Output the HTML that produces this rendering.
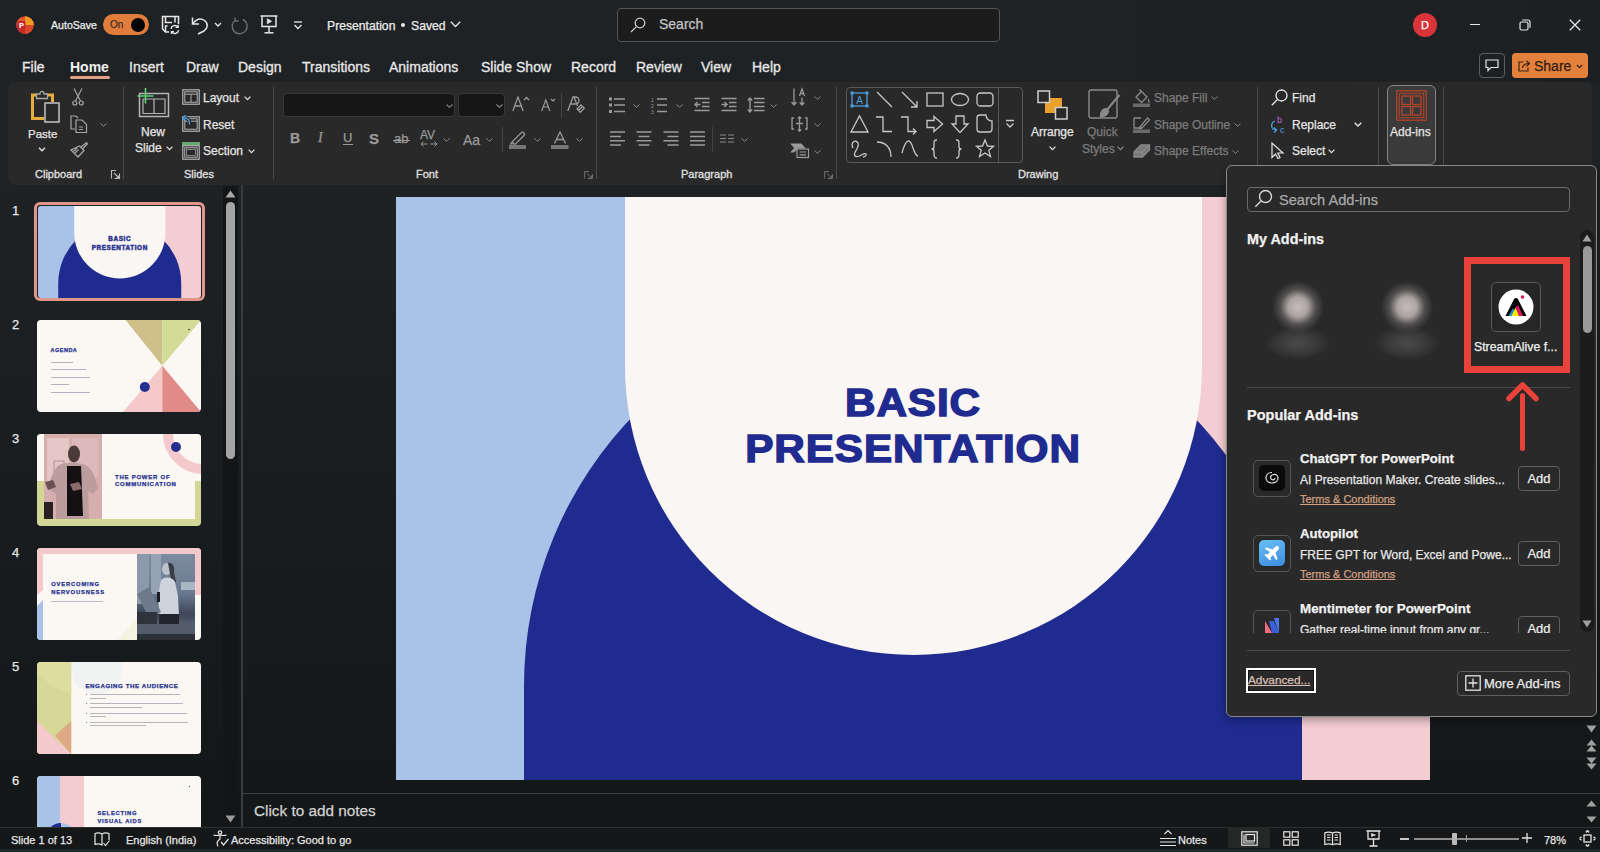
<!DOCTYPE html>
<html><head><meta charset="utf-8">
<style>
*{margin:0;padding:0;box-sizing:border-box}
html,body{width:1600px;height:852px;overflow:hidden;background:#1f2225;font-family:"Liberation Sans",sans-serif;color:#e6e6e6}
.a{position:absolute}
.t{position:absolute;white-space:nowrap;line-height:1;-webkit-text-stroke:0.25px currentColor}
#title{left:0;top:0;width:1600px;height:82px;background:linear-gradient(90deg,#1f2225 0%,#1f2225 70%,#1d2022 100%)}
#ribbon{left:8px;top:82px;width:1584px;height:103px;background:#292929;border-radius:8px}
#main{left:0;top:185px;width:1600px;height:642px;background:linear-gradient(180deg,#1e2224 0%,#191d1f 45%,#131718 100%)}
#status{left:0;top:827px;width:1600px;height:25px;background:#151718}
.tab{position:absolute;top:60px;font-size:14px;color:#e8e8e8;white-space:nowrap;line-height:1;-webkit-text-stroke:0.3px currentColor}
.sep{position:absolute;width:1px;background:#4a4a4a}
.lbl{position:absolute;font-size:12px;color:#e0e0e0;white-space:nowrap;line-height:1;-webkit-text-stroke:0.3px currentColor}
.rb{position:absolute;font-size:13px;color:#e6e6e6;white-space:nowrap;line-height:1;-webkit-text-stroke:0.25px currentColor}
.dim{color:#7c7c7c}
svg{position:absolute;overflow:visible}
</style></head><body>
<div id="title" class="a"></div>
<div id="ribbon" class="a"></div>
<div id="main" class="a"></div>
<div id="status" class="a"></div>

<!-- TITLEBAR -->
<div id="tb">
<svg style="left:16px;top:16px" width="18" height="18" viewBox="0 0 18 18">
 <circle cx="9" cy="9" r="8.7" fill="#e8582c"/>
 <path d="M9 9 L9 0.3 A8.7 8.7 0 0 1 17.7 9 Z" fill="#f39a22"/>
 <path d="M9 9 L17.7 9 A8.7 8.7 0 0 1 9 17.7 Z" fill="#d9462a"/>
 <path d="M0.3 9 A8.7 8.7 0 0 0 9 17.7 L9 9 Z" fill="#c42b2b"/>
 <rect x="1.5" y="5" width="8" height="8" rx="1" fill="#c1272d"/>
 <text x="5.5" y="11.8" font-size="7.5" font-weight="bold" fill="#fff" text-anchor="middle" font-family="Liberation Sans">P</text>
</svg>
<div class="t" style="left:51px;top:20px;font-size:10.6px;color:#f0f0f0">AutoSave</div>
<div class="a" style="left:103px;top:14px;width:46px;height:21px;border-radius:11px;background:#e07d3c"></div>
<div class="t" style="left:110px;top:20px;font-size:10px;color:#4a2e22">On</div>
<div class="a" style="left:131px;top:18px;width:14px;height:14px;border-radius:7px;background:#050505"></div>
<svg style="left:161px;top:15px" width="19" height="19" viewBox="0 0 19 19" fill="none" stroke="#e6e6e6" stroke-width="1.5">
 <path d="M8 17 H4.5 L1.5 14 V1.5 H17.5 V9"/><path d="M4.5 1.5 V7.5 H11 M14 1.5 V7.5"/><path d="M4.5 17 V11 H6.5"/>
 <path d="M10 13.8 A3.8 3.8 0 0 1 16.8 12" stroke-width="1.4"/><path d="M17.2 9.8 V12.4 H14.6" stroke-width="1.3"/>
 <path d="M17.6 15.2 A3.8 3.8 0 0 1 10.8 17" stroke-width="1.4"/><path d="M10.4 19 V16.6 H13" stroke-width="1.3"/>
</svg>
<svg style="left:191px;top:16px" width="19" height="19" viewBox="0 0 19 19" fill="none" stroke="#e6e6e6" stroke-width="1.5">
 <path d="M1.5 1.5 V8 H8"/><path d="M1.8 7.6 C5 3 9.5 1.6 13.5 4.5 C17.5 7.5 17 12 13 15 L7 18"/>
</svg>
<svg style="left:214px;top:22px" width="8" height="6" viewBox="0 0 8 6" fill="none" stroke="#e6e6e6" stroke-width="1.3"><path d="M1 1 L4 4 L7 1"/></svg>
<svg style="left:231px;top:17px" width="18" height="18" viewBox="0 0 18 18" fill="none" stroke="#6e6e6e" stroke-width="1.4">
 <path d="M12 2.5 A7.5 7.5 0 1 1 4.5 3"/><path d="M4 0.5 V4 H7.5"/>
</svg>
<svg style="left:260px;top:15px" width="18" height="19" viewBox="0 0 18 19" fill="none" stroke="#e6e6e6" stroke-width="1.5">
 <path d="M0.5 1 H17.5"/><path d="M2 1 V11.5 H16 V1"/><path d="M9 11.5 V17.5"/><path d="M4.5 17.8 H13.5"/>
 <path d="M7.3 3.8 L11.5 6.3 L7.3 8.8 Z" fill="#e6e6e6" stroke-width="0.8"/>
</svg>
<svg style="left:293px;top:21px" width="10" height="9" viewBox="0 0 10 9" fill="none" stroke="#e6e6e6" stroke-width="1.3">
 <path d="M1 1 H9"/><path d="M1.5 4 L5 7.5 L8.5 4"/>
</svg>
<div class="t" style="left:327px;top:20px;font-size:12.2px;color:#ececec">Presentation</div>
<div class="a" style="left:401px;top:23px;width:4px;height:4px;border-radius:2px;background:#ececec"></div>
<div class="t" style="left:411px;top:20px;font-size:12.2px;color:#ececec">Saved</div>
<svg style="left:450px;top:21px" width="11" height="7" viewBox="0 0 11 7" fill="none" stroke="#e6e6e6" stroke-width="1.3"><path d="M0.8 0.8 L5.5 5.5 L10.2 0.8"/></svg>

<div class="a" style="left:617px;top:8px;width:383px;height:34px;border-radius:4px;background:#1c1c1c;border:1px solid #555"></div>
<svg style="left:630px;top:17px" width="16" height="16" viewBox="0 0 16 16" fill="none" stroke="#c8c8c8" stroke-width="1.3">
 <circle cx="10" cy="6" r="4.8"/><path d="M6.6 9.4 L1 15"/>
</svg>
<div class="t" style="left:659px;top:17px;font-size:14px;color:#c4c4c4">Search</div>

<div class="a" style="left:1413px;top:13px;width:24px;height:24px;border-radius:12px;background:#d9343a"></div>
<div class="t" style="left:1413px;width:24px;text-align:center;top:20px;font-size:11px;color:#fff">D</div>
<div class="a" style="left:1470px;top:24px;width:10px;height:1.2px;background:#e6e6e6"></div>
<svg style="left:1519px;top:19px" width="12" height="12" viewBox="0 0 12 12" fill="none" stroke="#e6e6e6" stroke-width="1.2">
 <rect x="1" y="3" width="8" height="8" rx="1.5"/><path d="M3.2 1 H9 A2 2 0 0 1 11 3 V8.8"/>
</svg>
<svg style="left:1569px;top:19px" width="12" height="12" viewBox="0 0 12 12" fill="none" stroke="#e6e6e6" stroke-width="1.3">
 <path d="M0.8 0.8 L11.2 11.2 M11.2 0.8 L0.8 11.2"/>
</svg>

<div class="a" style="left:1479px;top:53px;width:26px;height:25px;border-radius:4px;border:1px solid #5e5e5e"></div>
<svg style="left:1485px;top:59px" width="14" height="13" viewBox="0 0 14 13" fill="none" stroke="#e6e6e6" stroke-width="1.2">
 <path d="M1 1 H13 V8.5 H6 L3 11.5 V8.5 H1 Z"/>
</svg>
<div class="a" style="left:1512px;top:53px;width:76px;height:25px;border-radius:4px;background:#e3813c"></div>
<svg style="left:1518px;top:59px" width="13" height="13" viewBox="0 0 13 13" fill="none" stroke="#3a2418" stroke-width="1.2">
 <path d="M5.5 3 H1 V12 H10 V8.5"/><path d="M4.5 9 C5 5.5 7.5 4.5 11 4.5"/><path d="M8.5 1.8 L11.5 4.5 L8.5 7.2"/>
</svg>
<div class="t" style="left:1534px;top:59px;font-size:14px;color:#2e1c12">Share</div>
<svg style="left:1576px;top:64px" width="7" height="5" viewBox="0 0 7 5" fill="none" stroke="#2e1c12" stroke-width="1.2"><path d="M0.8 0.8 L3.5 3.6 L6.2 0.8"/></svg>
</div>

<!-- RIBBON CONTENT -->
<div id="rib">
<!-- Clipboard -->
<svg style="left:30px;top:89px" width="30" height="34" viewBox="0 0 30 34" fill="none">
 <path d="M2.5 6 V29.5 H14" stroke="#e8ac3c" stroke-width="3"/><path d="M1 6 H8 M16 6 H22.5 V13" stroke="#e8ac3c" stroke-width="3"/>
 <path d="M6.5 9.5 V5 H10 C10 1.5 14 1.5 14 5 H17.5 V9.5 Z" stroke="#a8a8a8" stroke-width="1.3" fill="#292929"/>
 <rect x="15" y="14" width="14" height="19" stroke="#c4c4c4" stroke-width="1.5" fill="#292929"/>
</svg>
<div class="rb" style="left:28px;top:129px;font-size:11.5px">Paste</div>
<svg style="left:38px;top:147px" width="8" height="5" viewBox="0 0 8 5" fill="none" stroke="#e6e6e6" stroke-width="1.3"><path d="M1 0.8 L4 3.8 L7 0.8"/></svg>
<svg style="left:72px;top:88px" width="12" height="18" viewBox="0 0 12 18" fill="none" stroke="#a6a6a6" stroke-width="1.2">
 <path d="M2 0.5 L8.5 13 M10 0.5 L3.5 13"/><circle cx="2.8" cy="15" r="2"/><circle cx="9.2" cy="15" r="2"/>
</svg>
<svg style="left:70px;top:115px" width="18" height="18" viewBox="0 0 18 18" fill="none" stroke="#a6a6a6" stroke-width="1.2">
 <path d="M5 14 H1 V1 H6 L8 3"/><path d="M6 5 H12 L16.5 9.5 V17.5 H6 Z"/><path d="M9 12 H13 M9 14.5 H13"/>
</svg>
<svg style="left:100px;top:123px" width="7" height="4" viewBox="0 0 7 4" fill="none" stroke="#8a8a8a" stroke-width="1"><path d="M0.5 0.5 L3.5 3.3 L6.5 0.5"/></svg>
<svg style="left:70px;top:142px" width="18" height="16" viewBox="0 0 18 16" fill="none" stroke="#a6a6a6" stroke-width="1.3">
 <path d="M11 5 L16.5 0.8 L17.3 2 L13 6.5"/><path d="M9.5 4 L14 8.5 L8 15 L1 8 Z"/><path d="M5 11 L8.5 7.5 M3.5 9.5 L7 6"/>
</svg>
<div class="lbl" style="left:35px;top:169px;font-size:11px">Clipboard</div>
<svg style="left:111px;top:170px" width="9" height="9" viewBox="0 0 9 9" fill="none" stroke="#bdbdbd" stroke-width="1.1"><path d="M0.5 8.5 V0.5 H5 M8.5 3.5 V8.5 H3.5 M3 3 L8 8 M8 5 V8 H5"/></svg>
<div class="sep" style="left:123px;top:87px;height:92px"></div>

<!-- Slides -->
<svg style="left:137px;top:88px" width="34" height="30" viewBox="0 0 34 30" fill="none">
 <rect x="2.5" y="5.5" width="29" height="23" stroke="#b4b4b4" stroke-width="1.5"/>
 <path d="M6 11 H28 V25.5 H6 Z M17 11 V25.5" stroke="#b4b4b4" stroke-width="1.2"/>
 <path d="M8.5 0 V15.5 M0.5 8 H16.5" stroke="#5fd17a" stroke-width="1.6"/>
</svg>
<div class="rb" style="left:141px;top:126px;font-size:12px">New</div>
<div class="rb" style="left:135px;top:142px;font-size:12px">Slide</div>
<svg style="left:166px;top:146px" width="7" height="5" viewBox="0 0 7 5" fill="none" stroke="#e6e6e6" stroke-width="1.2"><path d="M0.6 0.6 L3.5 3.6 L6.4 0.6"/></svg>
<svg style="left:182px;top:89px" width="18" height="16" viewBox="0 0 18 16" fill="none" stroke="#c0c0c0" stroke-width="1.1">
 <rect x="0.8" y="0.8" width="16.4" height="14.4"/><rect x="2.8" y="2.8" width="12.4" height="10.4" stroke-width="0.9"/><path d="M2.8 5.2 H15.2 M9 5.2 V13.2" stroke-width="0.9"/>
</svg>
<div class="rb" style="left:203px;top:92px;font-size:12px">Layout</div>
<svg style="left:244px;top:96px" width="7" height="5" viewBox="0 0 7 5" fill="none" stroke="#e6e6e6" stroke-width="1.2"><path d="M0.6 0.6 L3.5 3.6 L6.4 0.6"/></svg>
<svg style="left:180px;top:114px" width="20" height="18" viewBox="0 0 20 18" fill="none" stroke="#c0c0c0" stroke-width="1.1">
 <rect x="2.8" y="2.8" width="16.4" height="14.4"/><rect x="4.8" y="4.8" width="12.4" height="10.4" stroke-width="0.9"/><path d="M4.8 7.2 H17.2" stroke-width="0.9"/>
 <path d="M9.5 10.5 C10 6 7.5 3.5 3.5 4" stroke="#292929" stroke-width="3.2"/>
 <path d="M9.5 10.5 C10 6 7.5 3.5 3.5 4" stroke="#4a9ee0" stroke-width="1.4"/><path d="M5.5 1.2 L2.5 4 L5.5 6.8" stroke="#4a9ee0" stroke-width="1.4"/>
</svg>
<div class="rb" style="left:203px;top:119px;font-size:12px">Reset</div>
<svg style="left:182px;top:142px" width="18" height="18" viewBox="0 0 18 18" fill="none" stroke="#c0c0c0" stroke-width="1.1">
 <rect x="0" y="0" width="18" height="3.5" fill="#6aa872" stroke="none"/>
 <rect x="0.8" y="3.8" width="16.4" height="13.4"/><rect x="2.8" y="5.8" width="12.4" height="9.4" stroke-width="0.9"/><rect x="4.5" y="7.5" width="9" height="6" stroke-width="0.8" stroke="#9a9a9a"/>
</svg>
<div class="rb" style="left:203px;top:145px;font-size:12px">Section</div>
<svg style="left:248px;top:149px" width="7" height="5" viewBox="0 0 7 5" fill="none" stroke="#e6e6e6" stroke-width="1.2"><path d="M0.6 0.6 L3.5 3.6 L6.4 0.6"/></svg>
<div class="lbl" style="left:184px;top:169px;font-size:11px">Slides</div>
<div class="sep" style="left:273px;top:87px;height:92px"></div>

<!-- Font -->
<div class="a" style="left:283px;top:93px;width:172px;height:24px;border-radius:4px;background:#161616;border:1px solid #383838"></div>
<svg style="left:446px;top:104px" width="7" height="4" viewBox="0 0 7 4" fill="none" stroke="#8a8a8a" stroke-width="1.1"><path d="M0.5 0.5 L3.5 3.3 L6.5 0.5"/></svg>
<div class="a" style="left:458px;top:93px;width:47px;height:24px;border-radius:4px;background:#161616;border:1px solid #383838"></div>
<svg style="left:496px;top:104px" width="7" height="4" viewBox="0 0 7 4" fill="none" stroke="#8a8a8a" stroke-width="1.1"><path d="M0.5 0.5 L3.5 3.3 L6.5 0.5"/></svg>
<svg style="left:512px;top:96px" width="18" height="16" viewBox="0 0 18 16" fill="none" stroke="#9a9a9a" stroke-width="1.3">
 <path d="M0.8 15 L6 1 L11.2 15 M2.6 10 H9.4"/><path d="M12 4 L14.5 1.5 L17 4"/>
</svg>
<svg style="left:541px;top:98px" width="15" height="14" viewBox="0 0 15 14" fill="none" stroke="#9a9a9a" stroke-width="1.2">
 <path d="M0.7 13 L4.8 2 L8.9 13 M2.2 9 H7.4"/><path d="M10 1 L12 3 L14 1"/>
</svg>
<div class="sep" style="left:561px;top:93px;height:25px;background:#444"></div>
<svg style="left:567px;top:96px" width="18" height="18" viewBox="0 0 18 18" fill="none" stroke="#9a9a9a" stroke-width="1.3">
 <path d="M0.8 15 L6 1 H7 L10.5 10 M1.5 13 L3.5 7.5"/><path d="M7 1 H8.5 A3.5 3.5 0 0 1 8.5 8 H4"/><path d="M10 13 L14 9 L17.3 12.3 L13.3 16.3 Z M11.5 14.5 L15.5 10.5"/>
</svg>
<div class="t" style="left:290px;top:131px;font-size:14px;font-weight:bold;color:#9a9a9a">B</div>
<div class="t" style="left:318px;top:131px;font-size:14px;font-style:italic;font-family:'Liberation Serif';color:#9a9a9a">I</div>
<div class="t" style="left:343px;top:131px;font-size:13px;color:#9a9a9a">U</div>
<div class="a" style="left:343px;top:144px;width:10px;height:1.3px;background:#9a9a9a"></div>
<div class="t" style="left:369px;top:131px;font-size:15px;font-weight:bold;color:#9a9a9a">S</div>
<div class="t" style="left:394px;top:132px;font-size:13px;color:#9a9a9a">ab</div>
<div class="a" style="left:393px;top:140px;width:17px;height:1.3px;background:#9a9a9a"></div>
<div class="t" style="left:420px;top:129px;font-size:12px;color:#9a9a9a">AV</div>
<svg style="left:420px;top:141px" width="18" height="6" viewBox="0 0 18 6" fill="none" stroke="#9a9a9a" stroke-width="1"><path d="M1 3 H7.5 M3.5 0.5 L1 3 L3.5 5.5 M10.5 3 H17 M14.5 0.5 L17 3 L14.5 5.5"/></svg>
<svg style="left:443px;top:138px" width="7" height="4" viewBox="0 0 7 4" fill="none" stroke="#8a8a8a" stroke-width="1"><path d="M0.5 0.5 L3.5 3.3 L6.5 0.5"/></svg>
<div class="t" style="left:463px;top:133px;font-size:14px;color:#9a9a9a">Aa</div>
<svg style="left:486px;top:138px" width="7" height="4" viewBox="0 0 7 4" fill="none" stroke="#8a8a8a" stroke-width="1"><path d="M0.5 0.5 L3.5 3.3 L6.5 0.5"/></svg>
<div class="sep" style="left:502px;top:127px;height:25px;background:#444"></div>
<svg style="left:509px;top:130px" width="18" height="19" viewBox="0 0 18 19" fill="none" stroke="#9a9a9a" stroke-width="1.2">
 <path d="M3 12 L12 3 A1.6 1.6 0 0 1 15 5.5 L6 14.5 Z M2.5 12.5 L1.5 14 H4.5"/>
 <rect x="0" y="15" width="17" height="4" fill="#777" stroke="none"/>
</svg>
<svg style="left:534px;top:138px" width="7" height="4" viewBox="0 0 7 4" fill="none" stroke="#8a8a8a" stroke-width="1"><path d="M0.5 0.5 L3.5 3.3 L6.5 0.5"/></svg>
<svg style="left:551px;top:131px" width="18" height="18" viewBox="0 0 18 18" fill="none" stroke="#9a9a9a" stroke-width="1.3">
 <path d="M3.5 12.5 L9 1 L14.5 12.5 M5.5 8.5 H12.5"/><rect x="0" y="14" width="17.5" height="4" fill="#777" stroke="none"/>
</svg>
<svg style="left:576px;top:138px" width="7" height="4" viewBox="0 0 7 4" fill="none" stroke="#8a8a8a" stroke-width="1"><path d="M0.5 0.5 L3.5 3.3 L6.5 0.5"/></svg>
<div class="lbl" style="left:416px;top:169px;font-size:11px">Font</div>
<svg style="left:584px;top:171px" width="9" height="8" viewBox="0 0 9 8" fill="none" stroke="#6a6a6a" stroke-width="1"><path d="M0.5 7.5 V0.5 H5 M8.5 3 V7.5 H4 M3 2.5 L7.5 7 M7.5 4.5 V7 H5"/></svg>
<div class="sep" style="left:596px;top:87px;height:92px"></div>
<!-- Paragraph -->
<svg style="left:609px;top:97px" width="17" height="16" viewBox="0 0 17 16" fill="#9a9a9a" stroke="#9a9a9a" stroke-width="1.4">
 <rect x="0" y="0.5" width="3" height="3" stroke="none"/><rect x="0" y="6.5" width="3" height="3" stroke="none"/><rect x="0" y="13" width="3" height="3" stroke="none"/>
 <path d="M5 2 H16 M5 8 H16 M5 14.5 H16" fill="none"/>
</svg>
<svg style="left:633px;top:104px" width="7" height="4" viewBox="0 0 7 4" fill="none" stroke="#8a8a8a" stroke-width="1"><path d="M0.5 0.5 L3.5 3.3 L6.5 0.5"/></svg>
<svg style="left:651px;top:97px" width="17" height="17" viewBox="0 0 17 17" fill="none" stroke="#9a9a9a" stroke-width="1.4">
 <path d="M6 2 H16 M6 8 H16 M6 14.5 H16"/>
 <text x="0" y="4.5" font-size="5" fill="#9a9a9a" stroke="none" font-family="Liberation Sans">1</text><text x="0" y="10.5" font-size="5" fill="#9a9a9a" stroke="none" font-family="Liberation Sans">2</text><text x="0" y="17" font-size="5" fill="#9a9a9a" stroke="none" font-family="Liberation Sans">3</text>
</svg>
<svg style="left:676px;top:104px" width="7" height="4" viewBox="0 0 7 4" fill="none" stroke="#8a8a8a" stroke-width="1"><path d="M0.5 0.5 L3.5 3.3 L6.5 0.5"/></svg>
<svg style="left:694px;top:97px" width="16" height="16" viewBox="0 0 16 16" fill="none" stroke="#9a9a9a" stroke-width="1.4">
 <path d="M0.5 1.5 H15.5 M8 5.5 H15.5 M8 9.5 H15.5 M0.5 13.5 H15.5 M1 7.5 H6.5 M3.5 5 L1 7.5 L3.5 10"/>
</svg>
<svg style="left:721px;top:97px" width="16" height="16" viewBox="0 0 16 16" fill="none" stroke="#9a9a9a" stroke-width="1.4">
 <path d="M0.5 1.5 H15.5 M8 5.5 H15.5 M8 9.5 H15.5 M0.5 13.5 H15.5 M0.5 7.5 H6 M3.5 5 L6 7.5 L3.5 10"/>
</svg>
<svg style="left:747px;top:97px" width="18" height="16" viewBox="0 0 18 16" fill="none" stroke="#9a9a9a" stroke-width="1.4">
 <path d="M7 1.5 H17.5 M7 5.5 H17.5 M7 9.5 H17.5 M7 13.5 H17.5 M3 1 V15 M0.8 3.5 L3 1 L5.2 3.5 M0.8 12.5 L3 15 L5.2 12.5"/>
</svg>
<svg style="left:770px;top:104px" width="7" height="4" viewBox="0 0 7 4" fill="none" stroke="#8a8a8a" stroke-width="1"><path d="M0.5 0.5 L3.5 3.3 L6.5 0.5"/></svg>
<svg style="left:791px;top:88px" width="17" height="18" viewBox="0 0 17 18" fill="none" stroke="#9a9a9a" stroke-width="1.3">
 <path d="M3 0.5 V17 M0.5 14 L3 17 L5.5 14"/><path d="M8.5 8 L11 1 L13.5 8 M9.3 5.7 H12.7"/><path d="M11 9.5 V17 M8.8 14.5 L11 17 L13.2 14.5"/>
</svg>
<svg style="left:814px;top:96px" width="7" height="4" viewBox="0 0 7 4" fill="none" stroke="#8a8a8a" stroke-width="1"><path d="M0.5 0.5 L3.5 3.3 L6.5 0.5"/></svg>
<svg style="left:791px;top:116px" width="17" height="16" viewBox="0 0 17 16" fill="none" stroke="#9a9a9a" stroke-width="1.3">
 <path d="M3 2 H1 V13 H3 M14 2 H16 V13 H14 M5 7.5 H12 M8.5 0.5 V15.5 M6.8 2.5 L8.5 0.8 L10.2 2.5 M6.8 13.5 L8.5 15.2 L10.2 13.5"/>
</svg>
<svg style="left:814px;top:123px" width="7" height="4" viewBox="0 0 7 4" fill="none" stroke="#8a8a8a" stroke-width="1"><path d="M0.5 0.5 L3.5 3.3 L6.5 0.5"/></svg>
<svg style="left:791px;top:143px" width="18" height="15" viewBox="0 0 18 15" fill="none" stroke="#9a9a9a" stroke-width="1.2">
 <path d="M0.5 1 H10 L13.5 5 H6.5 L3 9 H0.5 L4 5 Z" fill="#9a9a9a"/><rect x="6" y="6" width="11.5" height="8.5" fill="#292929"/><path d="M8.5 9 H15 M8.5 11.8 H15"/>
</svg>
<svg style="left:814px;top:150px" width="7" height="4" viewBox="0 0 7 4" fill="none" stroke="#8a8a8a" stroke-width="1"><path d="M0.5 0.5 L3.5 3.3 L6.5 0.5"/></svg>
<svg style="left:610px;top:131px" width="15" height="15" viewBox="0 0 15 15" fill="none" stroke="#9a9a9a" stroke-width="1.4">
 <path d="M0 1 H15 M0 5.5 H11 M0 9.8 H15 M0 14 H11"/>
</svg>
<svg style="left:636px;top:131px" width="16" height="15" viewBox="0 0 16 15" fill="none" stroke="#9a9a9a" stroke-width="1.4">
 <path d="M0.5 1 H15.5 M2.5 5.5 H13.5 M0.5 9.8 H15.5 M2.5 14 H13.5"/>
</svg>
<svg style="left:663px;top:131px" width="16" height="15" viewBox="0 0 16 15" fill="none" stroke="#9a9a9a" stroke-width="1.4">
 <path d="M0.5 1 H15.5 M4.5 5.5 H15.5 M0.5 9.8 H15.5 M4.5 14 H15.5"/>
</svg>
<svg style="left:690px;top:131px" width="15" height="15" viewBox="0 0 15 15" fill="none" stroke="#9a9a9a" stroke-width="1.4">
 <path d="M0 1 H15 M0 5.5 H15 M0 9.8 H15 M0 14 H15"/>
</svg>
<div class="sep" style="left:712px;top:127px;height:25px;background:#444"></div>
<svg style="left:720px;top:134px" width="14" height="9" viewBox="0 0 14 9" fill="none" stroke="#8a8a8a" stroke-width="1.1">
 <path d="M0 1 H6 M0 4.5 H6 M0 8 H6 M8 1 H14 M8 4.5 H14 M8 8 H14"/>
</svg>
<svg style="left:741px;top:138px" width="7" height="4" viewBox="0 0 7 4" fill="none" stroke="#8a8a8a" stroke-width="1"><path d="M0.5 0.5 L3.5 3.3 L6.5 0.5"/></svg>
<div class="lbl" style="left:681px;top:169px;font-size:11px">Paragraph</div>
<svg style="left:824px;top:171px" width="9" height="8" viewBox="0 0 9 8" fill="none" stroke="#6a6a6a" stroke-width="1"><path d="M0.5 7.5 V0.5 H5 M8.5 3 V7.5 H4 M3 2.5 L7.5 7 M7.5 4.5 V7 H5"/></svg>
<div class="sep" style="left:836px;top:87px;height:92px"></div>

<!-- Drawing -->
<div class="a" style="left:846px;top:87px;width:177px;height:76px;border-radius:4px;border:1px solid #5a5a5a"></div>
<div class="sep" style="left:998px;top:88px;height:74px;background:#5a5a5a"></div>
<svg style="left:850px;top:90px" width="145" height="70" viewBox="0 0 145 70" fill="none" stroke="#c8c8c8" stroke-width="1.3">
 <!-- row1 -->
 <rect x="2" y="3" width="15" height="13" stroke="#4a9fe0"/><text x="9.5" y="14" font-size="10" fill="#4a9fe0" stroke="none" text-anchor="middle" font-family="Liberation Sans">A</text>
 <rect x="0.5" y="1.5" width="3" height="3" fill="#4a9fe0" stroke="none"/><rect x="15.5" y="1.5" width="3" height="3" fill="#4a9fe0" stroke="none"/><rect x="0.5" y="14.5" width="3" height="3" fill="#4a9fe0" stroke="none"/><rect x="15.5" y="14.5" width="3" height="3" fill="#4a9fe0" stroke="none"/>
 <path d="M27 2 L42 17"/>
 <path d="M52 2 L67 17 M61 17 H67 V11"/>
 <rect x="77" y="3" width="16" height="13"/>
 <ellipse cx="110" cy="9.5" rx="8.5" ry="6"/>
 <rect x="127" y="3" width="16" height="13" rx="3.5"/>
 <!-- row2 -->
 <path d="M1 42 L9.5 26 L18 42 Z"/>
 <path d="M26 27 H33 V41.5 H42"/>
 <path d="M51 27 H58 V41.5 H66 M63 38.5 L66 41.5 L63 44.5"/>
 <path d="M77 30.5 H84 V26.5 L92.5 34 L84 41.5 V37.5 H77 Z"/>
 <path d="M106 26 H114 V34 H118 L110 42.5 L102 34 H106 Z"/>
 <path d="M127 28 A3 3 0 0 1 130 25 H136 A6 6 0 0 0 142 31 V39 A3 3 0 0 1 139 42 H130 A3 3 0 0 1 127 39 Z"/>
 <!-- row3 -->
 <path d="M3 58 C0 52 6 49 8 53 C10 58 2 63 5 66 C8 69 14 62 16 64 C17 65 15 67 13 67"/>
 <path d="M27 52 C35 52 41 57 41 67"/>
 <path d="M52 63 C56 48 60 48 63 58 C65 64 66 66 68 66"/>
 <path d="M87 50 C84 50 84 51 84 54 V57 C84 58 83 59 81.5 59 C83 59 84 60 84 61.5 V64.5 C84 67 85 68 87 68"/>
 <path d="M106 50 C109 50 109 51 109 54 V57 C109 58 110 59 111.5 59 C110 59 109 60 109 61.5 V64.5 C109 67 108 68 106 68"/>
 <path d="M135 50 L137.5 56 L143.5 56.3 L138.8 60.3 L140.5 66.5 L135 63 L129.5 66.5 L131.2 60.3 L126.5 56.3 L132.5 56 Z"/>
</svg>
<svg style="left:1005px;top:119px" width="10" height="10" viewBox="0 0 10 10" fill="none" stroke="#c8c8c8" stroke-width="1.3"><path d="M1 1.5 H9 M1.5 4.5 L5 8 L8.5 4.5"/></svg>
<svg style="left:1037px;top:90px" width="31" height="30" viewBox="0 0 31 30" fill="none">
 <rect x="8" y="8" width="17" height="15" fill="#eaa12c"/>
 <rect x="1" y="1" width="11.5" height="11.5" stroke="#cfcfcf" stroke-width="1.5" fill="#292929"/>
 <rect x="18.5" y="17.5" width="11.5" height="11.5" stroke="#cfcfcf" stroke-width="1.5" fill="#292929"/>
</svg>
<div class="rb" style="left:1031px;top:126px;font-size:12px">Arrange</div>
<svg style="left:1049px;top:146px" width="7" height="5" viewBox="0 0 7 5" fill="none" stroke="#e6e6e6" stroke-width="1.2"><path d="M0.6 0.6 L3.5 3.6 L6.4 0.6"/></svg>
<svg style="left:1088px;top:89px" width="33" height="33" viewBox="0 0 33 33" fill="none" stroke="#8a8a8a" stroke-width="1.4">
 <rect x="1" y="1" width="28" height="28" rx="2"/><path d="M31.5 6 C28 10 22 17 19 21" stroke-width="2"/><path d="M19 20 C15 19 12 23 12.5 27.5 C16 28 20 26 20.5 22 Z" fill="#8a8a8a"/>
</svg>
<div class="rb dim" style="left:1087px;top:126px;font-size:12px">Quick</div>
<div class="rb dim" style="left:1082px;top:143px;font-size:12px">Styles</div>
<svg style="left:1117px;top:146px" width="7" height="5" viewBox="0 0 7 5" fill="none" stroke="#8a8a8a" stroke-width="1.2"><path d="M0.6 0.6 L3.5 3.6 L6.4 0.6"/></svg>
<svg style="left:1133px;top:89px" width="18" height="18" viewBox="0 0 18 18" fill="none" stroke="#8a8a8a" stroke-width="1.3">
 <path d="M3 8 L8.5 2.5 L14 8 L8.5 13.5 Z M8.5 2.5 L6.5 0.5"/><path d="M15 10 C16 12 16.5 13 15.5 13.5" /><rect x="0" y="14.5" width="17" height="3.5" fill="#6a6a6a" stroke="none"/>
</svg>
<div class="rb dim" style="left:1154px;top:92px;font-size:12px">Shape Fill</div>
<svg style="left:1211px;top:96px" width="7" height="4" viewBox="0 0 7 4" fill="none" stroke="#8a8a8a" stroke-width="1"><path d="M0.5 0.5 L3.5 3.3 L6.5 0.5"/></svg>
<svg style="left:1133px;top:115px" width="18" height="18" viewBox="0 0 18 18" fill="none" stroke="#8a8a8a" stroke-width="1.3">
 <path d="M1 3 H8 M1 3 V13 H9"/><path d="M7 12 L14.5 3 L16.5 5 L9 13 L6.5 14 Z"/><rect x="0" y="14.5" width="17" height="3.5" fill="#6a6a6a" stroke="none"/>
</svg>
<div class="rb dim" style="left:1154px;top:119px;font-size:12px">Shape Outline</div>
<svg style="left:1234px;top:123px" width="7" height="4" viewBox="0 0 7 4" fill="none" stroke="#8a8a8a" stroke-width="1"><path d="M0.5 0.5 L3.5 3.3 L6.5 0.5"/></svg>
<svg style="left:1133px;top:143px" width="18" height="16" viewBox="0 0 18 16" fill="none" stroke="#8a8a8a" stroke-width="1.3">
 <path d="M1 9 L8 2 H16.5 L16.5 7 L9.5 14 H1 Z" fill="#7a7a7a"/><path d="M1 9 H9.5 V14 M9.5 9 L16.5 2"/>
</svg>
<div class="rb dim" style="left:1154px;top:145px;font-size:12px">Shape Effects</div>
<svg style="left:1232px;top:150px" width="7" height="4" viewBox="0 0 7 4" fill="none" stroke="#8a8a8a" stroke-width="1"><path d="M0.5 0.5 L3.5 3.3 L6.5 0.5"/></svg>
<div class="lbl" style="left:1018px;top:169px;font-size:11px">Drawing</div>

<!-- Editing -->
<div class="sep" style="left:1257px;top:87px;height:78px"></div>
<svg style="left:1271px;top:89px" width="17" height="17" viewBox="0 0 17 17" fill="none" stroke="#e6e6e6" stroke-width="1.3">
 <circle cx="10.5" cy="6.5" r="5.5"/><path d="M6.5 10.5 L0.8 16.2"/>
</svg>
<div class="rb" style="left:1292px;top:92px;font-size:12px">Find</div>
<svg style="left:1270px;top:115px" width="17" height="19" viewBox="0 0 17 19" fill="none" stroke-width="1.3">
 <text x="7" y="8" font-size="9" fill="#c06bd8" font-family="Liberation Sans">b</text>
 <text x="10" y="18" font-size="9" fill="#4aa0e6" font-family="Liberation Sans">c</text>
 <path d="M5 6 C1.5 7 0.5 11 3 14 L6.5 15" stroke="#4aa0e6"/><path d="M4 12.5 L6.5 15 L4 17.5" stroke="#4aa0e6"/>
</svg>
<div class="rb" style="left:1292px;top:119px;font-size:12px">Replace</div>
<svg style="left:1354px;top:122px" width="8" height="5" viewBox="0 0 8 5" fill="none" stroke="#e6e6e6" stroke-width="1.3"><path d="M0.7 0.7 L4 4 L7.3 0.7"/></svg>
<svg style="left:1271px;top:142px" width="14" height="17" viewBox="0 0 14 17" fill="none" stroke="#e6e6e6" stroke-width="1.2">
 <path d="M1 1 V15.5 L4.5 12 L7 16.5 L9 15.5 L6.8 11 H12 Z"/>
</svg>
<div class="rb" style="left:1292px;top:145px;font-size:12px">Select</div>
<svg style="left:1328px;top:149px" width="7" height="5" viewBox="0 0 7 5" fill="none" stroke="#e6e6e6" stroke-width="1.2"><path d="M0.6 0.6 L3.5 3.6 L6.4 0.6"/></svg>
<div class="sep" style="left:1378px;top:87px;height:78px"></div>
<div class="a" style="left:1387px;top:85px;width:49px;height:80px;border-radius:6px;background:#3a3a3a;border:1px solid #858585"></div>
<svg style="left:1396px;top:90px" width="31" height="31" viewBox="0 0 31 31" fill="none" stroke="#b4442a" stroke-width="1.3">
 <rect x="0.8" y="0.8" width="29.4" height="29.4"/><rect x="3.3" y="3.3" width="24.4" height="24.4" stroke-width="1"/>
 <rect x="6" y="6" width="8.5" height="8.5"/><rect x="16.5" y="6" width="8.5" height="8.5"/><rect x="6" y="16.5" width="8.5" height="8.5"/><rect x="16.5" y="16.5" width="8.5" height="8.5"/>
</svg>
<div class="rb" style="left:1390px;top:126px;font-size:12px">Add-ins</div>
<div class="sep" style="left:1443px;top:87px;height:78px"></div>
</div>

<!-- TABS -->
<div class="tab" style="left:22px">File</div>
<div class="tab" style="left:70px;font-weight:bold;color:#f2f2f2;-webkit-text-stroke:0">Home</div>
<div class="a" style="left:70px;top:76px;width:40px;height:3px;background:#e3a084;border-radius:2px"></div>
<div class="tab" style="left:129px">Insert</div>
<div class="tab" style="left:186px">Draw</div>
<div class="tab" style="left:238px">Design</div>
<div class="tab" style="left:302px">Transitions</div>
<div class="tab" style="left:389px">Animations</div>
<div class="tab" style="left:481px">Slide Show</div>
<div class="tab" style="left:571px">Record</div>
<div class="tab" style="left:636px">Review</div>
<div class="tab" style="left:701px">View</div>
<div class="tab" style="left:752px">Help</div>

<!-- SLIDE -->
<div class="a" id="slide" style="left:396px;top:197px;width:1034px;height:583px;background:#f4cdd2;overflow:hidden">
  <div class="a" style="left:0;top:0;width:517px;height:583px;background:#a9c3e8"></div>
  <div class="a" style="left:128px;top:100px;width:778px;height:800px;background:#1f2b8f;border-radius:389px 389px 0 0"></div>
  <div class="a" style="left:229px;top:-300px;width:577px;height:758px;background:#f9f6f3;border-radius:0 0 288.5px 288.5px"></div>
  <div class="t" style="left:0;width:1034px;text-align:center;top:183px;font-size:39px;letter-spacing:0.8px;font-weight:bold;color:#1f2b8f;line-height:46px;-webkit-text-stroke:1.4px #1f2b8f;transform:scaleX(1.085);transform-origin:517px 0">BASIC<br>PRESENTATION</div>
</div>

<!-- LEFT PANE -->
<div id="pane">
<div class="t" style="left:12px;top:204px;font-size:13px;color:#e8e8e8">1</div>
<div class="t" style="left:12px;top:318px;font-size:13px;color:#e8e8e8">2</div>
<div class="t" style="left:12px;top:432px;font-size:13px;color:#e8e8e8">3</div>
<div class="t" style="left:12px;top:546px;font-size:13px;color:#e8e8e8">4</div>
<div class="t" style="left:12px;top:660px;font-size:13px;color:#e8e8e8">5</div>
<div class="t" style="left:12px;top:774px;font-size:13px;color:#e8e8e8">6</div>

<!-- thumb1 -->
<div class="a" style="left:34px;top:202px;width:171px;height:99px;border:3px solid #e0978a;border-radius:6px"></div>
<div class="a" style="left:37.5px;top:205.5px;width:163.5px;height:92px;overflow:hidden;border-radius:3px">
 <div class="a" style="left:0;top:0;width:1034px;height:583px;background:#f4cdd2;transform:scale(0.1581);transform-origin:0 0">
  <div class="a" style="left:0;top:0;width:517px;height:583px;background:#a9c3e8"></div>
  <div class="a" style="left:128px;top:100px;width:778px;height:800px;background:#1f2b8f;border-radius:389px 389px 0 0"></div>
  <div class="a" style="left:229px;top:-300px;width:577px;height:758px;background:#f9f6f3;border-radius:0 0 288.5px 288.5px"></div>
  <div class="t" style="left:0;width:1034px;text-align:center;top:178px;font-size:40px;letter-spacing:4px;font-weight:bold;color:#2a3590;line-height:58px;-webkit-text-stroke:3px #2a3590">BASIC<br>PRESENTATION</div>
 </div>
</div>

<!-- thumb2 -->
<div class="a" style="left:37px;top:320px;width:164px;height:92px;overflow:hidden;border-radius:4px;background:#fbf7f3">
 <svg style="left:0;top:0" width="164" height="92" viewBox="0 0 164 92">
  <path d="M88.5 0 H125.3 V45.8 Z" fill="#cfc08a"/><path d="M125.3 0 H164 L125.3 45.8 Z" fill="#d3dc96"/>
  <path d="M125.3 45.8 V92 H86 Z" fill="#f5c9c9"/><path d="M125.3 45.8 L164 92 H125.3 Z" fill="#e08b88"/>
  <circle cx="107.8" cy="67" r="5" fill="#23308f"/>
  <circle cx="152" cy="9.5" r="0.8" fill="#333"/>
 </svg>
 <div class="t" style="left:13.5px;top:28px;font-size:5.5px;font-weight:bold;letter-spacing:0.5px;color:#23308f">AGENDA</div>
 <div class="a" style="left:13.5px;top:41.5px;width:22px;height:1.3px;background:#b4b0bc"></div>
 <div class="a" style="left:13.5px;top:49px;width:35px;height:1.3px;background:#b4b0bc"></div>
 <div class="a" style="left:13.5px;top:56.5px;width:39px;height:1.3px;background:#b4b0bc"></div>
 <div class="a" style="left:13.5px;top:64px;width:18px;height:1.3px;background:#b4b0bc"></div>
 <div class="a" style="left:13.5px;top:71.5px;width:39px;height:1.3px;background:#b4b0bc"></div>
</div>

<!-- thumb3 -->
<div class="a" style="left:37px;top:434px;width:164px;height:92px;overflow:hidden;border-radius:4px;background:#d3d796">
 <div class="a" style="left:0;top:0;width:164px;height:46.5px;background:#fbf7f3"></div>
 <div class="a" style="left:64.6px;top:0;width:93px;height:85px;background:#fbf7f3"></div>
 <div class="a" style="left:126px;top:-40px;width:80px;height:80px;border-radius:40px;border:10px solid #f3c9cc"></div>
 <div class="a" style="left:133.5px;top:7.6px;width:10.6px;height:10.6px;border-radius:6px;background:#23308f"></div>
 <svg style="left:6.5px;top:0" width="58" height="85" viewBox="0 0 58 85">
  <rect x="0" y="0" width="58" height="85" fill="#d6aeae"/>
  <rect x="3" y="4" width="22" height="50" fill="#e4c6c4"/><rect x="28" y="4" width="26" height="40" fill="#dcbab9"/>
  <rect x="10" y="27" width="10" height="10" fill="none" stroke="#b89090" stroke-width="1"/>
  <rect x="0" y="68" width="9" height="17" fill="#2a2122"/>
  <path d="M15 31 C22 28 37 28 43 32 C49 36 52 46 54 54 L49 60 L44 57 L45 85 H12 V60 L7 57 L5 51 C7 43 10 35 15 31 Z" fill="#bb9d9d"/>
  <path d="M23 32 H37 L39 82 H23 Z" fill="#151112"/>
  <ellipse cx="30" cy="20" rx="6" ry="8.5" fill="#4b3a3a"/>
  <path d="M1 48 L9 46 L12 53 L4 56 Z" fill="#6a5050"/>
  <path d="M26 50 L35 48 L38 55 L29 57 Z" fill="#8a6a6a"/>
</svg>
 <div class="t" style="left:78px;top:39.5px;font-size:6px;font-weight:bold;letter-spacing:0.75px;color:#23308f;line-height:7px">THE POWER OF<br>COMMUNICATION</div>
</div>

<!-- thumb4 -->
<div class="a" style="left:37px;top:548px;width:164px;height:92px;overflow:hidden;border-radius:4px;background:#fbf7f3">
 <div class="a" style="left:0;top:0;width:164px;height:47px;background:#f3c9cc"></div>
 <svg style="left:0;top:0" width="164" height="92" viewBox="0 0 164 92"><path d="M0 47 H6 V92 H0 Z" fill="#a9c3e8"/><path d="M0 47 L6 42 V52 L0 58 Z" fill="#fbf7f3"/><path d="M70 92 L100 70 V92 Z" fill="#f3f3dc"/></svg>
 <div class="a" style="left:6px;top:5.8px;width:94px;height:86.2px;background:#fbf7f3"></div>
 <svg style="left:80px;top:70px" width="20" height="22" viewBox="0 0 20 22"><path d="M0 22 L20 0 V22 Z" fill="#f4f3e2"/></svg>
 <svg style="left:100px;top:5.8px" width="58" height="86" viewBox="0 0 58 86">
  <defs><linearGradient id="g4" x1="0" y1="0" x2="0" y2="1"><stop offset="0" stop-color="#7d8ca0"/><stop offset="0.45" stop-color="#6a7a90"/><stop offset="0.7" stop-color="#3e4656"/><stop offset="0.85" stop-color="#5c6676"/><stop offset="1" stop-color="#2e3440"/></linearGradient></defs>
  <rect x="0" y="0" width="58" height="86" fill="url(#g4)"/>
  <rect x="0" y="0" width="12" height="50" fill="#8a99ac"/><rect x="14" y="0" width="10" height="40" fill="#94a2b4"/>
  <rect x="44" y="28" width="14" height="8" fill="#a9b6c4"/>
  <ellipse cx="29.5" cy="15" rx="4.5" ry="6" fill="#b9c2cd"/>
  <path d="M31 9 C35 8 38 12 37 18 L39 28 L35 30 L33 20 Z" fill="#3a3c44"/>
  <path d="M24 26 C28 22 36 23 38 28 L41 42 L42 62 H22 L21 42 Z" fill="#cdd4de"/>
  <rect x="20" y="38" width="3" height="10" fill="#1a1c22"/>
  <path d="M0 40 L12 33 L24 58 L12 64 Z" fill="#6e7a8a"/>
  <rect x="22" y="60" width="20" height="10" fill="#22252c"/>
  <rect x="0" y="58" width="20" height="12" fill="#2e333d"/>
  <rect x="0" y="70" width="58" height="16" fill="#525c6a"/>
  <rect x="0" y="80" width="58" height="6" fill="#2a2f38"/>
</svg>
 <div class="t" style="left:14.2px;top:33px;font-size:5.8px;font-weight:bold;letter-spacing:0.85px;color:#23308f;line-height:7.7px">OVERCOMING<br>NERVOUSNESS</div>
 <div class="a" style="left:14.2px;top:52.8px;width:52px;height:1.3px;background:#c0bcc4"></div>
</div>

<!-- thumb5 -->
<div class="a" style="left:37px;top:662px;width:164px;height:92px;overflow:hidden;border-radius:4px;background:#fbf7f3">
 <div class="a" style="left:34px;top:-20px;width:52px;height:52px;border-radius:26px;background:#f1f2f2"></div>
 <svg style="left:0;top:0" width="35" height="92" viewBox="0 0 35 92">
  <rect x="0" y="0" width="34.2" height="92" fill="#d5d897"/>
  <path d="M0 0 H34.2 V30 C20 30 6 18 0 10 Z" fill="#dedd9f"/>
  <path d="M0 58.8 L34.2 92 H0 Z" fill="#f3c9cc"/>
  <path d="M34.2 59 V92 L18 73.6 Z" fill="#dea985"/>
 </svg>
 <div class="t" style="left:48.4px;top:20.5px;font-size:6.2px;font-weight:bold;letter-spacing:0.55px;color:#23308f">ENGAGING THE AUDIENCE</div>
 <div class="a" style="left:53px;top:31.5px;width:90px;height:1.1px;background:#b8b4bd"></div>
 <div class="a" style="left:53px;top:35.5px;width:16px;height:1.1px;background:#b8b4bd"></div>
 <div class="a" style="left:53px;top:41.3px;width:93px;height:1.1px;background:#b8b4bd"></div>
 <div class="a" style="left:53px;top:44.8px;width:52px;height:1.1px;background:#b8b4bd"></div>
 <div class="a" style="left:53px;top:50.5px;width:97px;height:1.1px;background:#b8b4bd"></div>
 <div class="a" style="left:53px;top:54px;width:16px;height:1.1px;background:#b8b4bd"></div>
 <div class="a" style="left:53px;top:59.7px;width:98px;height:1.1px;background:#b8b4bd"></div>
 <div class="a" style="left:53px;top:63.2px;width:56px;height:1.1px;background:#b8b4bd"></div>
 <div class="a" style="left:48.6px;top:31.5px;width:1.2px;height:1.2px;background:#777"></div>
 <div class="a" style="left:48.6px;top:41.3px;width:1.2px;height:1.2px;background:#777"></div>
 <div class="a" style="left:48.6px;top:50.5px;width:1.2px;height:1.2px;background:#777"></div>
 <div class="a" style="left:48.6px;top:59.7px;width:1.2px;height:1.2px;background:#777"></div>
</div>

<!-- thumb6 -->
<div class="a" style="left:37px;top:776px;width:164px;height:51px;overflow:hidden;border-radius:4px 4px 0 0;background:#fbf7f3">
 <div class="a" style="left:0;top:0;width:22.7px;height:92px;background:#a9c3e8"></div>
 <div class="a" style="left:22.7px;top:0;width:24px;height:92px;background:#f4cbcf"></div>
 <div class="a" style="left:8.6px;top:47px;width:30px;height:30px;border-radius:15px;background:linear-gradient(90deg,#1f2b8f 50%,#a9c3e8 50%)"></div>
 <div class="a" style="left:152px;top:9.5px;width:1px;height:1px;background:#444"></div>
 <div class="t" style="left:60.4px;top:34px;font-size:5.8px;font-weight:bold;letter-spacing:0.75px;color:#23308f;line-height:7.8px">SELECTING<br>VISUAL AIDS</div>
</div>

<!-- pane scrollbar -->
<div class="a" style="left:223px;top:186px;width:15px;height:641px;background:#141516"></div>
<svg style="left:225px;top:190px" width="11" height="8" viewBox="0 0 11 8"><path d="M0.5 7.5 L5.5 0.5 L10.5 7.5 Z" fill="#a8a8a8"/></svg>
<div class="a" style="left:226px;top:202px;width:9px;height:257px;border-radius:4.5px;background:#a4a4a4"></div>
<svg style="left:225px;top:815px" width="11" height="8" viewBox="0 0 11 8"><path d="M0.5 0.5 L5.5 7.5 L10.5 0.5 Z" fill="#9a9a9a"/></svg>
</div>

<!-- NOTES -->
<div class="a" style="left:243px;top:793px;width:1357px;height:1px;background:#3c4142"></div>
<div class="a" style="left:241px;top:185px;width:2px;height:642px;background:#393c3d"></div>
<div class="t" style="left:254px;top:803px;font-size:15.3px;color:#d2d2d2">Click to add notes</div>

<!-- POPUP -->
<div class="a" id="popup" style="left:1226px;top:165px;width:371px;height:552px;background:#292929;border:1px solid #8a8a8a;border-radius:6px;box-shadow:0 3px 8px rgba(0,0,0,0.35)"></div>
<div id="popc">
<div class="a" style="left:1247px;top:187px;width:323px;height:25px;border-radius:4px;border:1px solid #6a6a6a"></div>
<svg style="left:1254px;top:189px" width="19" height="19" viewBox="0 0 19 19" fill="none" stroke="#d6d6d6" stroke-width="1.4">
 <circle cx="11.5" cy="7.5" r="6"/><path d="M7.3 11.7 L1.3 17.7"/>
</svg>
<div class="t" style="left:1279px;top:193px;font-size:14.6px;color:#a8a8a8">Search Add-ins</div>
<div class="t" style="left:1247px;top:232px;font-size:14.4px;font-weight:bold;color:#f2f2f2">My Add-ins</div>

<div class="a" style="left:1272px;top:281px;width:52px;height:52px;background:radial-gradient(circle closest-side,rgba(196,188,186,1) 0%,rgba(180,174,172,0.92) 38%,rgba(120,116,115,0.5) 68%,rgba(41,41,41,0) 100%)"></div>
<div class="a" style="left:1265px;top:326px;width:66px;height:34px;background:radial-gradient(closest-side,rgba(78,78,78,0.9) 0%,rgba(70,70,70,0.6) 55%,rgba(41,41,41,0) 100%)"></div>
<div class="a" style="left:1381px;top:281px;width:52px;height:52px;background:radial-gradient(circle closest-side,rgba(196,188,186,1) 0%,rgba(180,174,172,0.92) 38%,rgba(120,116,115,0.5) 68%,rgba(41,41,41,0) 100%)"></div>
<div class="a" style="left:1374px;top:326px;width:66px;height:34px;background:radial-gradient(closest-side,rgba(78,78,78,0.9) 0%,rgba(70,70,70,0.6) 55%,rgba(41,41,41,0) 100%)"></div>
<div class="a" style="left:1464px;top:257px;width:106px;height:116px;border:7px solid #e8423a"></div>
<div class="a" style="left:1491px;top:282px;width:50px;height:50px;border-radius:5px;border:1px solid #5a5a5a;background:#262626"></div>
<svg style="left:1498px;top:289px" width="36" height="36" viewBox="0 0 36 36">
 <circle cx="18" cy="18" r="17.5" fill="#fff"/>
 <path d="M7.5 27 L15.8 10.5 C16.8 8.5 19.2 8.5 20.2 10.5 L28.5 27 Z" fill="#050505"/>
 <path d="M10.5 27 L15 19 L18.5 27 Z" fill="#1a8fc8"/>
 <path d="M13.5 27 L17.5 18.5 L22 27 Z" fill="#f4e800"/>
 <path d="M17.5 18.5 L20 16 L25 27 H21 Z" fill="#d8175e"/>
 <circle cx="24.5" cy="8" r="1.8" fill="#d8175e"/>
</svg>
<div class="t" style="left:1474px;top:341px;font-size:12.3px;color:#f0f0f0">StreamAlive f...</div>

<div class="a" style="left:1247px;top:387px;width:323px;height:1px;background:#4a4a4a"></div>
<div class="a" style="left:1520px;top:393px;width:5px;height:58px;background:#e8423a;border-radius:2.5px"></div>
<svg style="left:1505px;top:381px" width="35" height="22" viewBox="0 0 35 22" fill="none" stroke="#e8423a" stroke-width="5.5" stroke-linecap="round" stroke-linejoin="round"><path d="M4 17.5 L17.5 4 L31 17.5"/></svg>

<div class="t" style="left:1247px;top:408px;font-size:14.5px;font-weight:bold;color:#f2f2f2">Popular Add-ins</div>

<div class="a" style="left:1227px;top:441px;width:355px;height:192px;overflow:hidden">
 <!-- item1 -->
 <div class="a" style="left:26px;top:19px;width:38px;height:37px;border-radius:5px;border:1px solid #555"></div>
 <div class="a" style="left:32px;top:24px;width:26px;height:26px;border-radius:5px;background:#0a0a0a"></div>
 <svg style="left:37px;top:29px" width="16" height="16" viewBox="0 0 16 16" fill="none" stroke="#e6e6e6" stroke-width="1.2"><path d="M8 2.5 C4 2.5 2 5 2 8 C2 11 4.5 13 8 13 C11.5 13 14 11 14 8 C14 5.5 12 4 9.5 4.5 C7 5 6 7 7 8.8 C8 10.5 11 10 11 8"/></svg>
 <div class="t" style="left:73px;top:11px;font-size:13.2px;font-weight:bold;color:#f2f2f2">ChatGPT for PowerPoint</div>
 <div class="t" style="left:73px;top:33px;font-size:12px;color:#e8e8e8">AI Presentation Maker. Create slides...</div>
 <div class="t" style="left:73px;top:53px;font-size:11px;color:#d3a083;text-decoration:underline">Terms &amp; Conditions</div>
 <div class="a" style="left:291px;top:25px;width:42px;height:25px;border-radius:4px;border:1px solid #606060"></div>
 <div class="t" style="left:291px;width:42px;text-align:center;top:31px;font-size:13px;color:#ececec">Add</div>
 <!-- item2 -->
 <div class="a" style="left:26px;top:94px;width:38px;height:37px;border-radius:5px;border:1px solid #555"></div>
 <div class="a" style="left:32px;top:99px;width:26px;height:26px;border-radius:5px;background:linear-gradient(160deg,#68c0f4,#3d8be0)"></div>
 <svg style="left:36px;top:103px" width="18" height="18" viewBox="0 0 18 18"><path d="M15.5 2.5 C14.5 1.5 13 2 12 3 L9.5 5.5 L3 3.5 L1.8 4.7 L7 8 L4.5 10.5 L2.5 10 L1.5 11 L4.2 13.8 L7 16.5 L8 15.5 L7.5 13.5 L10 11 L13.3 16.2 L14.5 15 L12.5 8.5 L15 6 C16 5 16.5 3.5 15.5 2.5 Z" fill="#fff"/></svg>
 <div class="t" style="left:73px;top:86px;font-size:13.2px;font-weight:bold;color:#f2f2f2">Autopilot</div>
 <div class="t" style="left:73px;top:108px;font-size:12px;color:#e8e8e8">FREE GPT for Word, Excel and Powe...</div>
 <div class="t" style="left:73px;top:128px;font-size:11px;color:#d3a083;text-decoration:underline">Terms &amp; Conditions</div>
 <div class="a" style="left:291px;top:100px;width:42px;height:25px;border-radius:4px;border:1px solid #606060"></div>
 <div class="t" style="left:291px;width:42px;text-align:center;top:106px;font-size:13px;color:#ececec">Add</div>
 <!-- item3 -->
 <div class="a" style="left:26px;top:169px;width:38px;height:37px;border-radius:5px;border:1px solid #555"></div>
 <svg style="left:36px;top:176px" width="18" height="18" viewBox="0 0 18 18"><path d="M2 16 L2 4 L9 16 Z" fill="#f06b7c"/><path d="M6 4 L11 4 L16 16 L9 16 Z" fill="#3a5fd8"/><path d="M11 1 L16 1 L16 16 Z" fill="#4a7af0"/></svg>
 <div class="t" style="left:73px;top:161px;font-size:13.4px;font-weight:bold;color:#f2f2f2">Mentimeter for PowerPoint</div>
 <div class="t" style="left:73px;top:183px;font-size:12px;color:#e8e8e8">Gather real-time input from any gr...</div>
 <div class="a" style="left:291px;top:175px;width:42px;height:25px;border-radius:4px;border:1px solid #606060"></div>
 <div class="t" style="left:291px;width:42px;text-align:center;top:181px;font-size:13px;color:#ececec">Add</div>
</div>

<!-- popup scrollbar -->
<div class="a" style="left:1580px;top:230px;width:14px;height:402px;border-radius:7px;background:#1c1c1c"></div>
<svg style="left:1582px;top:234px" width="10" height="8" viewBox="0 0 10 8"><path d="M0.5 7.5 L5 0.5 L9.5 7.5 Z" fill="#a0a0a0"/></svg>
<div class="a" style="left:1583px;top:246px;width:9px;height:87px;border-radius:4.5px;background:#9a9a9a"></div>
<svg style="left:1582px;top:620px" width="10" height="8" viewBox="0 0 10 8"><path d="M0.5 0.5 L5 7.5 L9.5 0.5 Z" fill="#a0a0a0"/></svg>

<div class="a" style="left:1247px;top:650px;width:323px;height:1px;background:#4a4a4a"></div>
<div class="a" style="left:1246px;top:668px;width:70px;height:25px;border:2px solid #fff"></div>
<div class="a" style="left:1248px;top:670px;width:66px;height:21px;border:1px solid #111"></div>
<div class="t" style="left:1248px;top:675px;font-size:11.8px;color:#dcc0b8;text-decoration:underline">Advanced...</div>
<div class="a" style="left:1457px;top:671px;width:113px;height:25px;border-radius:4px;border:1px solid #5e5e5e"></div>
<svg style="left:1465px;top:675px" width="16" height="16" viewBox="0 0 16 16" fill="none" stroke="#e6e6e6" stroke-width="1.3"><rect x="0.8" y="0.8" width="14.4" height="14.4"/><path d="M8 3.5 V12.5 M3.5 8 H12.5"/></svg>
<div class="t" style="left:1484px;top:677px;font-size:13px;color:#ececec">More Add-ins</div>
</div>

<!-- STATUS -->
<div id="stc">
<div class="a" style="left:0;top:827px;width:1600px;height:1px;background:#2c3031"></div>
<div class="a" style="left:0;top:849px;width:1600px;height:3px;background:#1d2929"></div>
<div class="t" style="left:11px;top:835px;font-size:11px;color:#e6e6e6">Slide 1 of 13</div>
<svg style="left:94px;top:832px" width="16" height="15" viewBox="0 0 16 15" fill="none" stroke="#e6e6e6" stroke-width="1.2">
 <path d="M8 2 C6 0.8 3 0.8 1 1.5 V12.5 C3 11.8 6 11.8 8 13 V2 Z M8 2 C10 0.8 13 0.8 15 1.5 V8"/><path d="M9.5 11 L11.5 13.5 L15.5 8.5"/>
</svg>
<div class="t" style="left:126px;top:835px;font-size:11px;color:#e6e6e6">English (India)</div>
<svg style="left:212px;top:830px" width="18" height="18" viewBox="0 0 18 18" fill="none" stroke="#e6e6e6" stroke-width="1.2">
 <circle cx="8" cy="2.5" r="1.7"/><path d="M1.5 5 C4 6 6 5.5 8 5 C10 5.5 12 6 14.5 5 M8 5 V9 C5 11 4 13 6 16.5"/><path d="M9 12 L11.5 15 L16.5 9"/>
</svg>
<div class="t" style="left:231px;top:835px;font-size:11px;color:#e6e6e6">Accessibility: Good to go</div>

<svg style="left:1159px;top:829px" width="18" height="18" viewBox="0 0 18 18" fill="none" stroke="#e6e6e6" stroke-width="1.2">
 <path d="M1 9.5 H17 M1 13 H17 M1 16.5 H17 M5.5 5 L9 1.5 L12.5 5"/>
</svg>
<div class="t" style="left:1178px;top:835px;font-size:11px;color:#e6e6e6">Notes</div>
<div class="a" style="left:1228px;top:827px;width:42px;height:21px;background:#262828"></div>
<svg style="left:1241px;top:831px" width="17" height="15" viewBox="0 0 17 15" fill="none" stroke="#e6e6e6" stroke-width="1.2">
 <rect x="0.8" y="0.8" width="15.4" height="13.4"/><rect x="5" y="3.5" width="8.5" height="6.5"/><path d="M3 3.5 V12 H13.5"/>
</svg>
<svg style="left:1283px;top:831px" width="16" height="15" viewBox="0 0 16 15" fill="none" stroke="#e6e6e6" stroke-width="1.2">
 <rect x="0.8" y="0.8" width="6" height="5.4"/><rect x="9.2" y="0.8" width="6" height="5.4"/><rect x="0.8" y="8.8" width="6" height="5.4"/><rect x="9.2" y="8.8" width="6" height="5.4"/>
</svg>
<svg style="left:1324px;top:831px" width="17" height="15" viewBox="0 0 17 15" fill="none" stroke="#e6e6e6" stroke-width="1.2">
 <path d="M8.5 2 C6.5 1 3 1 0.8 1.8 V13.5 C3 12.8 6.5 12.8 8.5 13.8 C10.5 12.8 14 12.8 16.2 13.5 V1.8 C14 1 10.5 1 8.5 2 Z M8.5 2 V13.8 M3 4 H6.5 M3 6.5 H6.5 M3 9 H6.5 M10.5 4 H14 M10.5 6.5 H14 M10.5 9 H14"/>
</svg>
<svg style="left:1366px;top:830px" width="15" height="17" viewBox="0 0 15 17" fill="none" stroke="#e6e6e6" stroke-width="1.3">
 <path d="M0.5 1 H14.5 M2 1 V9 H13 V1 M7.5 9 V15.5 M3.5 16 H11.5"/><path d="M5.5 3.5 L9.5 5 L5.5 6.5 Z" fill="#e6e6e6" stroke-width="0.6"/>
</svg>
<div class="a" style="left:1400px;top:838px;width:9px;height:1.5px;background:#c8c8c8"></div>
<div class="a" style="left:1414px;top:838px;width:105px;height:2px;background:#8e8e8e"></div>
<div class="a" style="left:1466px;top:835px;width:1px;height:7px;background:#9a9a9a"></div>
<div class="a" style="left:1452px;top:833px;width:5px;height:12px;border-radius:1px;background:#b8b8b8"></div>
<svg style="left:1522px;top:833px" width="10" height="10" viewBox="0 0 10 10" fill="none" stroke="#e6e6e6" stroke-width="1.3"><path d="M5 0 V10 M0 5 H10"/></svg>
<div class="t" style="left:1544px;top:835px;font-size:11px;color:#e6e6e6">78%</div>
<svg style="left:1579px;top:830px" width="17" height="17" viewBox="0 0 17 17" fill="none" stroke="#e6e6e6" stroke-width="1.3">
 <rect x="5" y="5" width="7" height="7"/><path d="M8.5 0.5 L6.8 2.5 M8.5 0.5 L10.2 2.5 M8.5 16.5 L6.8 14.5 M8.5 16.5 L10.2 14.5 M0.5 8.5 L2.5 6.8 M0.5 8.5 L2.5 10.2 M16.5 8.5 L14.5 6.8 M16.5 8.5 L14.5 10.2"/>
</svg>
<!-- right scroll arrows -->
<svg style="left:1586px;top:725px" width="11" height="8" viewBox="0 0 11 8"><path d="M0.5 0.5 L5.5 7.5 L10.5 0.5 Z" fill="#a0a0a0"/></svg>
<svg style="left:1586px;top:739px" width="11" height="13" viewBox="0 0 11 13" fill="#a0a0a0"><path d="M0.5 6.5 L5.5 0.5 L10.5 6.5 Z M0.5 12.5 L5.5 6.5 L10.5 12.5 Z"/></svg>
<svg style="left:1586px;top:757px" width="11" height="13" viewBox="0 0 11 13" fill="#a0a0a0"><path d="M0.5 0.5 L5.5 6.5 L10.5 0.5 Z M0.5 6.5 L5.5 12.5 L10.5 6.5 Z"/></svg>
<svg style="left:1586px;top:800px" width="11" height="7" viewBox="0 0 11 7"><path d="M0.5 6.5 L5.5 0.5 L10.5 6.5 Z" fill="#a0a0a0"/></svg>
<svg style="left:1586px;top:816px" width="11" height="7" viewBox="0 0 11 7"><path d="M0.5 0.5 L5.5 6.5 L10.5 0.5 Z" fill="#a0a0a0"/></svg>
</div>

</body></html>
